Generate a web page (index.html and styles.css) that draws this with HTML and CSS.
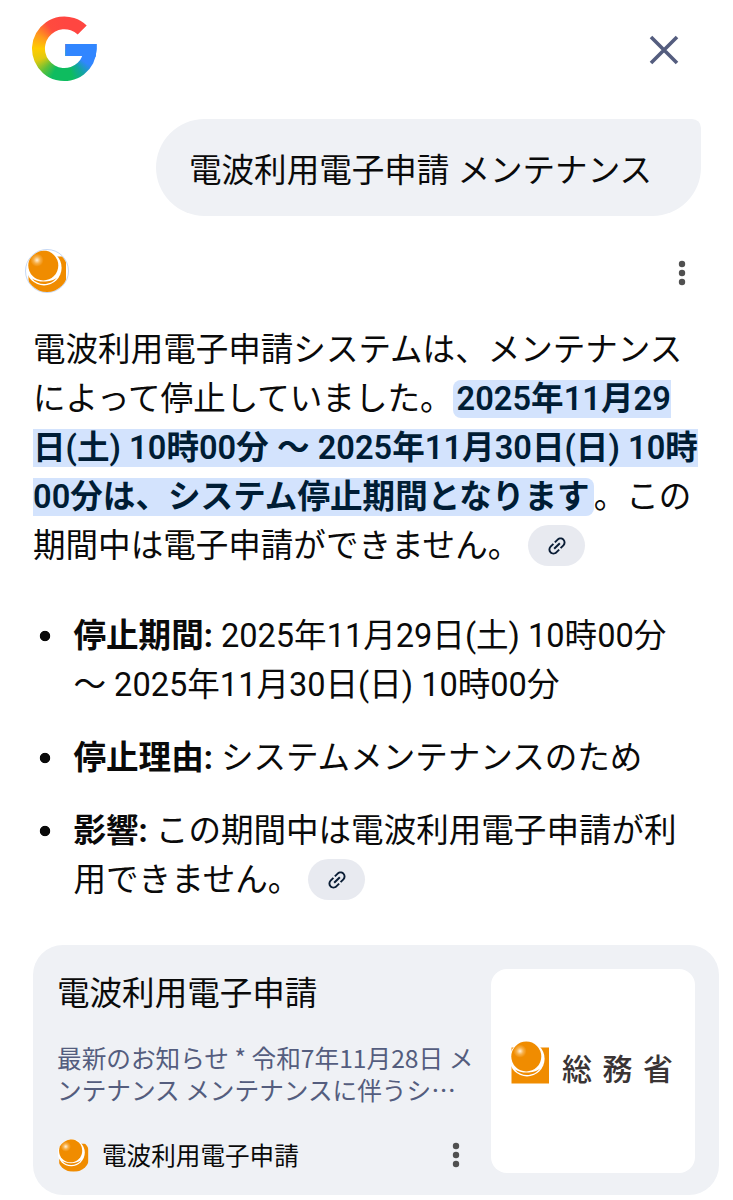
FILE: index.html
```html
<!DOCTYPE html>
<html lang="ja">

<head>
    <meta charset="utf-8">
    <title>電波利用電子申請 メンテナンス</title>
    <meta name="viewport" content="width=device-width, initial-scale=1">
    <link rel="stylesheet" href="styles.css">
</head>

<body>
    <svg class="defs" aria-hidden="true">
        <defs>
            <radialGradient id="shine" cx="0.29" cy="0.32" r="0.22">
                <stop offset="0" stop-color="#fff0d8"/>
                <stop offset="0.5" stop-color="#f7b04a"/>
                <stop offset="1" stop-color="#f08c00"/>
            </radialGradient>
            <symbol id="soumu" viewBox="0 0 40 44">
                <path d="M1.5 7.5H39V43.5H1.5z" fill="#f08c00"/>
                <circle cx="17" cy="18.8" r="17.6" fill="#fff"/>
                <path d="M5 29.5C11 37 24 37 30 28.5C25 33.5 11 34 5 29.5z" fill="#f08c00"/>
                <circle cx="16.3" cy="16.5" r="15" fill="url(#shine)"/>
            </symbol>
            <symbol id="link" viewBox="0 0 24 24">
                <path transform="rotate(-45 12 12)" d="M3.9 12c0-1.71 1.39-3.1 3.1-3.1h4V7H7c-2.76 0-5 2.24-5 5s2.24 5 5 5h4v-1.9H7c-1.71 0-3.1-1.39-3.1-3.1zM8 13h8v-2H8v2zm9-6h-4v1.9h4c1.71 0 3.1 1.39 3.1 3.1s-1.39 3.1-3.1 3.1h-4V17h4c2.76 0 5-2.24 5-5s-2.24-5-5-5z"/>
            </symbol>
            <symbol id="dots" viewBox="0 0 8 26">
                <circle cx="4" cy="4" r="3.2"/>
                <circle cx="4" cy="13" r="3.2"/>
                <circle cx="4" cy="22" r="3.2"/>
            </symbol>
        </defs>
    </svg>

    <header class="header">
        <div class="g-logo"></div>
        <svg class="close" viewBox="0 0 30 30"><path d="M2 2L28 28M28 2L2 28"/></svg>
    </header>

    <div class="query">電波利用電子申請 メンテナンス</div>

    <div class="source-row">
        <span class="avatar"><svg class="avatar-logo"><use href="#soumu"/></svg></span>
        <svg class="dots"><use href="#dots"/></svg>
    </div>

    <main class="answer">
        <p>電波利用電子申請システムは、メンテナンス<br>によって停止していました。<mark>2025年11月29<br>日(土) 10時00分 〜 2025年11月30日(日) 10時<br>00分は、システム停止期間となります</mark>。この<br>期間中は電子申請ができません。<span class="chip"><svg><use href="#link"/></svg></span></p>
        <ul>
            <li><b>停止期間:</b> 2025年11月29日(土) 10時00分<br>〜 2025年11月30日(日) 10時00分</li>
            <li><b>停止理由:</b> システムメンテナンスのため</li>
            <li><b>影響:</b> この期間中は電波利用電子申請が利<br>用できません。<span class="chip"><svg><use href="#link"/></svg></span></li>
        </ul>
    </main>

    <article class="card">
        <div class="card-body">
            <h2>電波利用電子申請</h2>
            <p class="snippet">最新のお知らせ * 令和7年11月28日 メ<br>ンテナンス メンテナンスに伴うシ…</p>
            <div class="card-footer">
                <span class="favicon"><svg class="favicon-logo"><use href="#soumu"/></svg></span>
                <span class="site">電波利用電子申請</span>
                <svg class="dots"><use href="#dots"/></svg>
            </div>
        </div>
        <div class="thumb">
            <svg class="thumb-logo"><use href="#soumu"/></svg>
            <span class="thumb-text">総務省</span>
        </div>
    </article>
</body>

</html>
```
FILE: styles.css
```css
* {
    box-sizing: border-box;
}

body {
    margin: 0;
    padding: 16px 0 0 32px;
    height: 1200px;
    overflow: hidden;
    background: #fff;
    color: #0a0a0a;
    font-family: Roboto, 'Noto Sans CJK JP', sans-serif;
    font-size: 32.55px;
    line-height: 48.9px;
    white-space: nowrap;
}

.defs {
    display: block;
    width: 0;
    height: 0;
}

.header {
    display: flex;
    justify-content: space-between;
    width: 646.5px;
    height: 67px;
}

.g-logo {
    width: 66px;
    height: 67px;
    background:
        linear-gradient(#3186ff, #3186ff) 33px 27px / 33px 14px no-repeat,
        conic-gradient(from 0deg at 32.8px 33.4px, #ff4641 0deg 65deg, #3186ff 66deg 122deg, #12a5a0 143deg, #0ebc5f 165deg 205deg, #5dc03a 225deg, #e0ca10 248deg, #ffcc00 272deg, #ff9a1c 298deg, #ff4b3e 326deg, #ff4641 360deg);
    clip-path: path('M54.7 9.5A32.3 32.3 0 1 0 64.6 33V28H33.3V40H50.3A19.4 19.4 0 1 1 45.7 18.5Z');
}

.close {
    width: 30px;
    height: 30px;
    margin-top: 18.5px;
    fill: none;
    stroke: #545d7e;
    stroke-width: 3.6;
}

.query {
    width: 544.5px;
    height: 97px;
    margin: 36px 0 0 124px;
    padding: 28px 0 0 33px;
    background: #eff1f5;
    border-radius: 49px 9px 49px 49px;
}

.source-row {
    display: flex;
    align-items: center;
    justify-content: space-between;
    width: 661px;
    height: 44px;
    margin: 33px 0 0 -7px;
}

.avatar,
.favicon {
    border-radius: 50%;
    overflow: hidden;
}

.avatar {
    width: 44px;
    height: 44px;
    border: 1.5px solid #c5d8f5;
    background: #fff;
}

.avatar-logo {
    display: block;
    width: 40px;
    height: 44px;
    margin: -1px 0 0 1px;
}

.dots {
    width: 8px;
    height: 26px;
    fill: #505050;
}

.source-row .dots {
    margin-top: 3px;
}

.answer {
    margin: 33.4px 0 0 1px;
}

.answer p {
    margin: 0;
}

mark {
    padding: 0 4px;
    background: #d3e3fd;
    border-radius: 8px;
    color: #001d35;
    font-weight: 600;
    letter-spacing: 0.04px;
}

.chip {
    display: inline-flex;
    align-items: center;
    justify-content: center;
    width: 57px;
    height: 41px;
    margin-left: 8px;
    border-radius: 21px;
    background: #e8eaf0;
    vertical-align: -0.5px;
    line-height: 0;
}

.chip svg {
    width: 24px;
    height: 24px;
    fill: #0a1d35;
}

.answer ul {
    margin: 40.7px 0 0;
    padding: 0;
    list-style: none;
}

.answer li {
    display: block;
    padding-left: 40.5px;
    margin-bottom: 24.4px;
    background: radial-gradient(circle at 12px 24px, #0a0a0a 4.8px, transparent 5.6px);
}

.answer li:last-child {
    margin-bottom: 0;
}

.card {
    display: flex;
    justify-content: space-between;
    width: 685.5px;
    height: 250px;
    margin: 39.9px 0 0 1px;
    padding: 24px 24px 22px 24px;
    border-radius: 30px;
    background: #eff1f5;
}

.card-body {
    width: 420px;
}

.card h2 {
    margin: 0;
    font-size: 32.55px;
    font-weight: 400;
    line-height: 51px;
}

.snippet {
    margin: 21px 0 0;
    color: #545d7e;
    font-family: 'Noto Sans CJK JP', sans-serif;
    font-size: 24.65px;
    line-height: 32.6px;
}

.card-footer {
    display: flex;
    align-items: center;
    height: 34px;
    margin-top: 32px;
}

.favicon {
    width: 33px;
    height: 33px;
}

.favicon-logo {
    display: block;
    width: 31px;
    height: 34px;
    margin: -1px 0 0 0.5px;
}

.site {
    flex: 1;
    margin-left: 12px;
    padding-top: 3px;
    font-size: 24.6px;
    line-height: 34px;
}

.card-footer .dots {
    margin-right: 17px;
}

.thumb {
    display: flex;
    align-items: center;
    width: 204px;
    height: 204px;
    padding-left: 19.5px;
    border-radius: 16px;
    background: #fff;
}

.thumb-logo {
    width: 40px;
    height: 44px;
    margin-top: -17px;
}

.thumb-text {
    margin: 0 0 0 12px;
    color: #3a3434;
    font-size: 30px;
    font-weight: 500;
    letter-spacing: 10.5px;
}
```
